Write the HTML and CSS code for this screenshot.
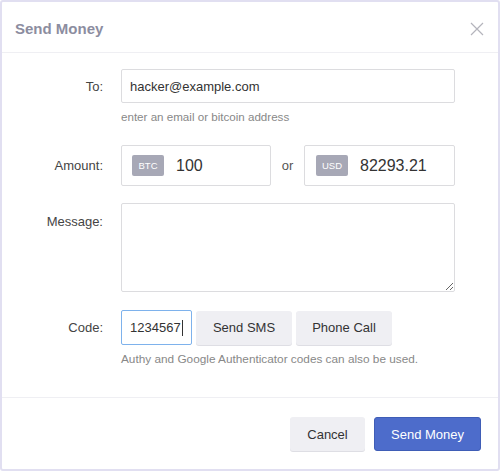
FILE: index.html
```html
<!DOCTYPE html>
<html>
<head>
<meta charset="utf-8">
<link rel="stylesheet" href="styles.css">
</head>
<body>
<div class="modal">
  <div class="modal-header">
    <h1 class="title">Send Money</h1>
    <button class="close" aria-label="Close">
      <svg width="14" height="14" viewBox="0 0 14 14"><path d="M1 1L13 13M13 1L1 13" stroke="#b4b4bc" stroke-width="1.2" fill="none"/></svg>
    </button>
  </div>
  <div class="modal-body">
    <div class="row row-to">
      <label class="label lbl-34">To:</label>
      <div class="field">
        <input class="input input-to" type="text" value="hacker@example.com">
        <div class="help">enter an email or bitcoin address</div>
      </div>
    </div>
    <div class="row row-amount">
      <label class="label lbl-41">Amount:</label>
      <div class="field amount-field">
        <div class="amount">
          <span class="badge">BTC</span>
          <span class="amount-value">100</span>
        </div>
        <span class="or">or</span>
        <div class="amount amount-usd">
          <span class="badge">USD</span>
          <span class="amount-value">82293.21</span>
        </div>
      </div>
    </div>
    <div class="row row-message">
      <label class="label lbl-top">Message:</label>
      <div class="field">
        <textarea class="textarea"></textarea>
      </div>
    </div>
    <div class="row row-code">
      <label class="label lbl-35">Code:</label>
      <div class="field">
        <div class="code-line">
          <div class="code-input">1234567<span class="caret"></span></div>
          <button class="btn btn-sms">Send SMS</button>
          <button class="btn btn-call">Phone Call</button>
        </div>
        <div class="help help-code">Authy and Google Authenticator codes can also be used.</div>
      </div>
    </div>
  </div>
  <div class="modal-footer">
    <button class="btn btn-cancel">Cancel</button>
    <button class="btn btn-primary">Send Money</button>
  </div>
</div>
</body>
</html>
```

FILE: styles.css
```css
* { box-sizing: border-box; }
html, body { margin: 0; padding: 0; background: #ffffff; }
body {
  font-family: "Liberation Sans", Arial, sans-serif;
  color: #333;
}
.modal {
  width: 500px;
  height: 471px;
  border: 2px solid #e1dff1;
  border-radius: 3px;
  background: #fff;
  display: flex;
  flex-direction: column;
}
.modal-header {
  height: 51px;
  border-bottom: 1px solid #efeff3;
  display: flex;
  align-items: center;
  justify-content: space-between;
  padding: 0 14px 0 13px;
}
.title {
  margin: 0;
  font-size: 15px;
  font-weight: bold;
  color: #8c8da0;
  padding-top: 2px;
}
.close {
  border: 0;
  background: none;
  padding: 0;
  width: 14px;
  height: 14px;
  display: flex;
  margin-top: 4px;
}
.modal-body {
  padding: 16px 43px 0 0;
  flex: 1;
}
.row { display: flex; }
.label {
  width: 101px;
  margin-right: 18px;
  display: flex;
  justify-content: flex-end;
  align-items: center;
  font-size: 13px;
  color: #444;
  flex-shrink: 0;
}
.lbl-34 { height: 34px; }
.lbl-41 { height: 41px; }
.lbl-35 { height: 35px; }
.lbl-top { align-items: flex-start; padding-top: 11px; }
.field { flex: 1; }
.input {
  display: block;
  width: 100%;
  height: 34px;
  border: 1px solid #dcdcdf;
  border-radius: 2px;
  padding: 0 8px;
  font-family: inherit;
  font-size: 13px;
  color: #333;
  outline: none;
}
.help {
  font-size: 11.6px;
  color: #888;
  margin-top: 7px;
  line-height: 14px;
}
.row-amount { margin-top: 21px; }
.amount-field { display: flex; align-items: center; }
.amount {
  width: 150px;
  height: 41px;
  border: 1px solid #dcdcdf;
  border-radius: 2px;
  display: flex;
  align-items: center;
  padding-left: 10px;
}
.amount-usd { flex: 1; padding-left: 11px; }
.badge {
  width: 32px;
  height: 21px;
  background: #a7a8b6;
  color: #fff;
  font-size: 9.5px;
  border-radius: 2px;
  display: flex;
  align-items: center;
  justify-content: center;
}
.amount-value {
  font-size: 16px;
  color: #333;
  margin-left: 12px;
}
.or {
  width: 33px;
  text-align: center;
  font-size: 13px;
  color: #555;
}
.row-message { margin-top: 17px; }
.textarea {
  display: block;
  width: 100%;
  height: 89px;
  border: 1px solid #dcdcdf;
  border-radius: 2px;
  resize: vertical;
  font-family: inherit;
  outline: none;
}
.row-code { margin-top: 18px; }
.code-line { display: flex; align-items: center; gap: 4px; }
.code-input {
  width: 71px;
  height: 35px;
  border: 1.5px solid #7eb2ec;
  border-radius: 2px;
  display: flex;
  align-items: center;
  padding-left: 8px;
  font-size: 13px;
  color: #333;
}
.caret {
  display: inline-block;
  width: 1px;
  height: 16px;
  background: #333;
  margin-left: 1px;
}
.btn {
  font-family: inherit;
  font-size: 13px;
  height: 34px;
  border-radius: 3px;
  border: 0;
  cursor: pointer;
}
.btn-sms, .btn-call, .btn-cancel {
  background: #efeff3;
  color: #333;
  box-shadow: 0 1px 0 #dedee4;
}
.btn-sms, .btn-call { width: 96px; }
.help-code { margin-top: 7px; font-size: 11.8px; }
.modal-footer {
  border-top: 1px solid #efeff3;
  height: 72px;
  display: flex;
  justify-content: flex-end;
  align-items: flex-start;
  gap: 9px;
  padding: 19px 17px 0 0;
}
.btn-cancel { width: 75px; }
.btn-primary {
  width: 107px;
  background: #4d6ccb;
  color: #fff;
  border: 1px solid #3f5db6;
}
```
